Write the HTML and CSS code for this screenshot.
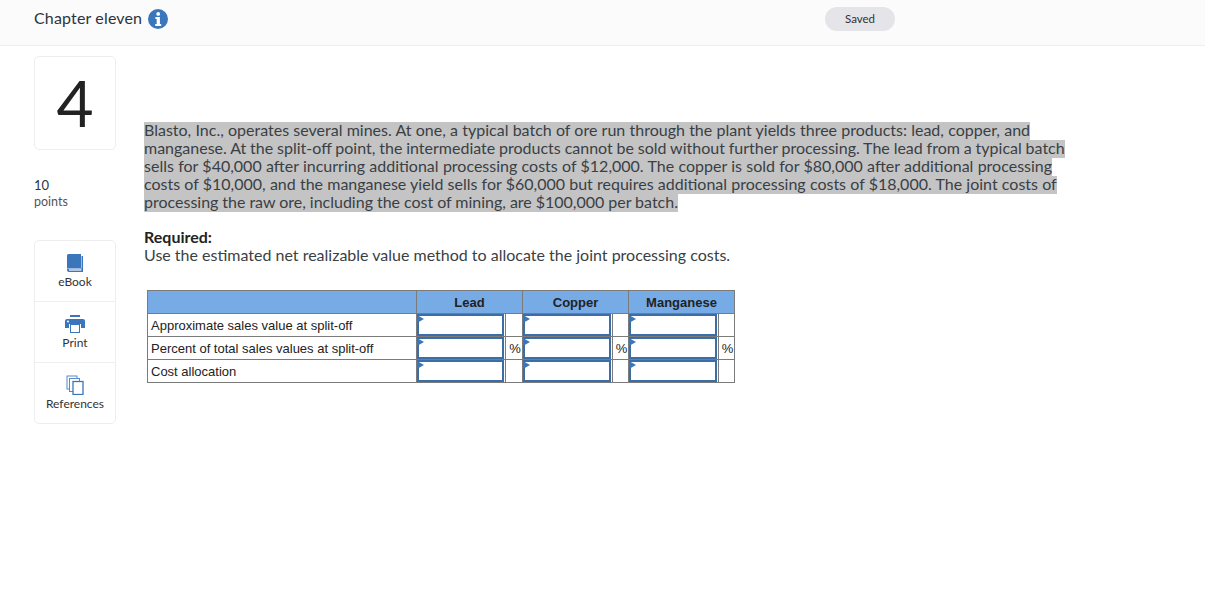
FILE: index.html
```html
<!DOCTYPE html>
<html lang="en">
<head>
<meta charset="utf-8">
<title>Chapter eleven</title>
<link rel="stylesheet" href="styles.css">
</head>
<body>
<header class="topbar">
  <div class="chapter">
    <span class="chapter-title">Chapter eleven</span>
    <svg class="info" viewBox="0 0 20 20" width="20" height="20"><circle cx="10" cy="10" r="10" fill="#3b76bd"/><circle cx="10.2" cy="4.9" r="1.9" fill="#fff"/><path d="M7.4 8h4.5v7h1.3v1.9H7.2V15h1.5v-5.1H7.4z" fill="#fff"/></svg>
  </div>
  <div class="saved">Saved</div>
</header>
<main class="page">
  <aside class="side">
    <div class="number">4</div>
    <div class="points"><div class="points-num">10</div><div class="points-label">points</div></div>
    <nav class="tools">
      <div class="tool">
        <svg viewBox="0 0 18 20" width="18" height="20"><path d="M1 16V2.5A1.5 1.5 0 0 1 2.5 1H15v14H3a2 2 0 0 0-2 1z" fill="#3b76bd"/><path d="M15.5 3H17v16H3a2 2 0 0 1-2-2c0-1 .9-1.5 2-1.5h12.5z" fill="#3b76bd"/><path d="M3 17h12.5" stroke="#fff" stroke-width="1.2"/></svg>
        <span>eBook</span>
      </div>
      <div class="tool">
        <svg viewBox="0 0 20 18" width="20" height="18"><rect x="5" y="0" width="10" height="2" fill="#3b76bd"/><path d="M2 4h16a2 2 0 0 1 2 2v7h-4V9H4v4H0V6a2 2 0 0 1 2-2z" fill="#3b76bd"/><circle cx="3" cy="6.5" r="1" fill="#fff"/><rect x="5.5" y="9.5" width="9" height="8" fill="#fff" stroke="#3b76bd"/></svg>
        <span>Print</span>
      </div>
      <div class="tool">
        <svg viewBox="0 0 18 20" width="18" height="20" fill="#fff" stroke="#5a8ac8"><rect x="1" y="1" width="10" height="13"/><rect x="3.5" y="3.5" width="10" height="13"/><rect x="7" y="6.5" width="10" height="13" stroke="#3b76bd" stroke-width="1.3"/></svg>
        <span>References</span>
      </div>
    </nav>
  </aside>
  <section class="content">
    <div class="question">
      <span class="sel line-a">Blasto, Inc., operates several mines. At one, a typical batch of ore run through the plant yields three products: lead, copper, and</span>
      <span class="sel line-b">manganese. At the split-off point, the intermediate products cannot be sold without further processing. The lead from a typical batch</span>
      <span class="sel line-c">sells for $40,000 after incurring additional processing costs of $12,000. The copper is sold for $80,000 after additional processing</span>
      <span class="sel line-d">costs of $10,000, and the manganese yield sells for $60,000 but requires additional processing costs of $18,000. The joint costs of</span>
      <span class="sel line-e">processing the raw ore, including the cost of mining, are $100,000 per batch.</span>
    </div>
    <div class="required">
      <strong>Required:</strong>
      <p>Use the estimated net realizable value method to allocate the joint processing costs.</p>
    </div>
    <table class="grid">
      <colgroup><col class="col-label"><col class="col-inp-first"><col class="col-unit-first"><col class="col-inp"><col class="col-unit"><col class="col-inp"><col class="col-unit"></colgroup>
      <thead>
        <tr><th class="c-label"></th><th colspan="2">Lead</th><th colspan="2">Copper</th><th colspan="2">Manganese</th></tr>
      </thead>
      <tbody>
        <tr><td class="c-label">Approximate sales value at split-off</td><td class="inp"></td><td class="unit"></td><td class="inp"></td><td class="unit"></td><td class="inp"></td><td class="unit"></td></tr>
        <tr><td class="c-label">Percent of total sales values at split-off</td><td class="inp"></td><td class="unit">%</td><td class="inp"></td><td class="unit">%</td><td class="inp"></td><td class="unit">%</td></tr>
        <tr><td class="c-label">Cost allocation</td><td class="inp"></td><td class="unit"></td><td class="inp"></td><td class="unit"></td><td class="inp"></td><td class="unit"></td></tr>
      </tbody>
    </table>
  </section>
</main>
</body>
</html>
```
FILE: styles.css
```css
* { box-sizing: border-box; }
html, body { margin: 0; padding: 0; background: #fff; }
body { font-family: "Lato", "Open Sans", sans-serif; color: #333; height: 601px; overflow: hidden; }

.topbar {
  height: 46px;
  background: #fbfbfc;
  border-bottom: 1px solid #eee;
  display: flex;
  align-items: flex-start;
  padding: 7px 310px 0 34px;
  justify-content: space-between;
}
.chapter { display: flex; align-items: center; gap: 6px; height: 20px; }
.chapter-title { font-size: 16px; color: #2b3440; letter-spacing: .15px; }
.info { display: block; margin-top: 4px; }
.saved {
  width: 70px; height: 24px; border-radius: 12px;
  background: #e5e4e8; color: #333;
  font-size: 11.5px; line-height: 23px; text-align: center;
}

.page { display: flex; padding: 10px 0 0 34px; }
.side { width: 82px; flex: none; }
.number {
  height: 94px;
  border: 1px solid #eee; border-radius: 5px;
  font-size: 64px; line-height: 91px; text-align: center; color: #222;
}
.points { margin-top: 27px; }
.points-num { font-size: 13px; line-height: 17px; color: #2b3440; }
.points-label { font-size: 12.5px; line-height: 16px; color: #555; }
.tools { margin-top: 30px; border: 1px solid #eee; border-radius: 5px; height: 184px; }
.tool {
  height: 61px; padding-top: 12px;
  display: flex; flex-direction: column; align-items: center; gap: 2px;
  border-bottom: 1px solid #eee;
  font-size: 12px; line-height: 14px; color: #333;
}
.tool:nth-child(2) { padding-top: 13px; gap: 3px; }
.tool:last-child { border-bottom: 0; }
.tool svg { display: block; }

.content { margin-left: 28px; padding-top: 66px; }
.question, .required { font-size: 16px; line-height: 18px; color: #3a3f45; }
.sel { display: block; width: fit-content; background: #c4c4c4; line-height: 16px; padding-bottom: 2px; }
.line-a { word-spacing: .13px; }
.line-b { word-spacing: -.25px; }
.line-c { word-spacing: .2px; }
.line-d { word-spacing: .1px; }
.line-e { word-spacing: -.15px; }
.required { margin-top: 16px; }
.required strong { display: block; color: #222; }
.required p { margin: 0; }

.grid {
  margin: 26px 0 0 3px;
  border-collapse: collapse;
  table-layout: fixed;
  width: 587px;
  font-family: "Liberation Sans", Arial, sans-serif;
  font-size: 13px;
  color: #222;
}
.col-label { width: 269px; }
.col-inp-first { width: 89px; }
.col-inp { width: 90px; }
.col-unit-first { width: 17px; }
.col-unit { width: 16px; }
.grid th, .grid td { border: 1px solid #7b7b7b; padding: 0; height: 23px; }
.grid th { background: #77abe6; font-weight: bold; text-align: center; padding-top: 1px; }
.grid .c-label { padding-left: 3px; text-align: left; }
.grid .inp { position: relative; }
.grid .inp::after {
  content: ""; position: absolute; inset: 0 1px 0 0;
  border: 2px solid #3b6ea8;
}
.grid .inp::before {
  content: ""; position: absolute; left: 0; top: 1px; z-index: 1;
  border-left: 7px solid #3b76bd;
  border-top: 4px solid transparent;
  border-bottom: 4px solid transparent;
}
.grid .unit { text-align: center; padding-left: 2px; }
```
